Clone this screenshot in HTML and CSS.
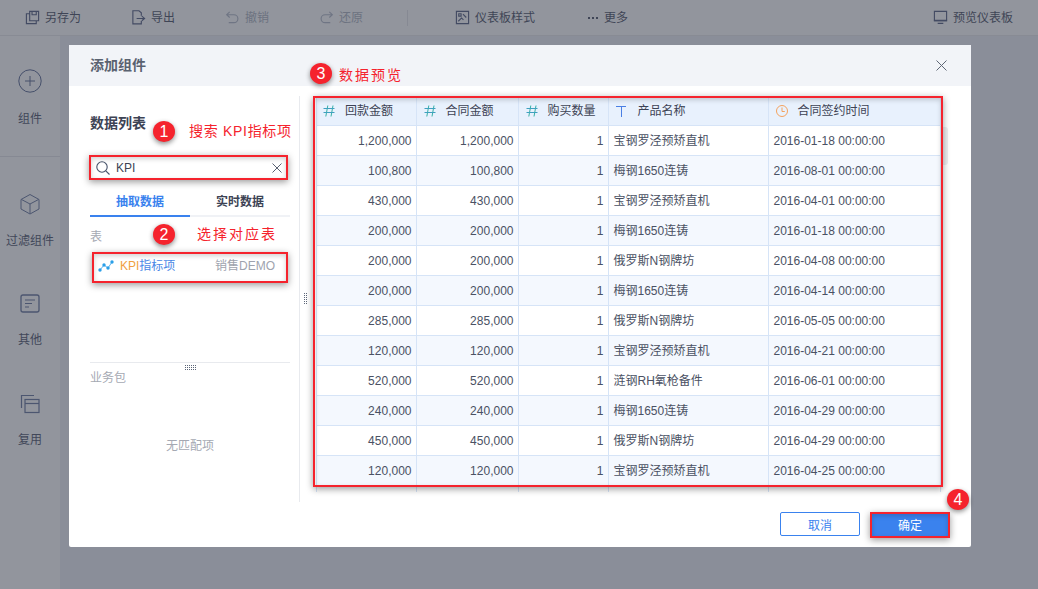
FILE: index.html
```html
<!DOCTYPE html>
<html lang="zh">
<head>
<meta charset="utf-8">
<title>添加组件</title>
<link rel="stylesheet" href="styles.css">
</head>
<body>
<svg class="defs" aria-hidden="true">
  <symbol id="hash" viewBox="0 0 12 12"><path d="M4.800 .5 2.800 11.500M10 .5 8 11.500" fill="none" stroke="#35b0a5" stroke-width="1"/><path d="M.5 3.500h11M.5 7.500h11" fill="none" stroke="#3fa0c0" stroke-width="1"/></symbol>
  <symbol id="text" viewBox="0 0 12 12"><path d="M0 1.500h10M5.500 1.500V12" fill="none" stroke="#4a7fe4" stroke-width="1"/></symbol>
  <symbol id="clock" viewBox="0 0 12 12"><circle cx="6" cy="6" r="5.500" fill="none" stroke="#f3a25e" stroke-width="1"/><path d="M6 2.500V6.500H8.800" fill="none" stroke="#f3a25e" stroke-width="1"/></symbol>
</svg>
<div class="app">
  <header class="toolbar">
    <span class="tool"><svg class="tool-icon" viewBox="0 0 16 16"><path d="M5 1.500h9.500v10H5zM5 4H1.500v10.500H12V11.500M7.500 1.500V5h4.500V1.500" fill="none" stroke="#434b63" stroke-width="1.200"/></svg>另存为</span>
    <span class="tool"><svg class="tool-icon" viewBox="0 0 16 16"><path d="M11 6V3L8.500 .8H2v14h9v-3M6 9h8.500M11.500 6.500 14.500 9l-3 2.500" fill="none" stroke="#434b63" stroke-width="1.200"/></svg>导出</span>
    <span class="tool dim"><svg class="tool-icon" viewBox="0 0 16 16"><path d="M5 2 1.800 5 5 8M2 5h7.500a4.200 4.200 0 0 1 0 8.500H4" fill="none" stroke="#6f7584" stroke-width="1.200"/></svg>撤销</span>
    <span class="tool dim"><svg class="tool-icon" viewBox="0 0 16 16"><path d="M11 2l3.200 3L11 8M14 5H6.500a4.200 4.200 0 0 0 0 8.500H12" fill="none" stroke="#6f7584" stroke-width="1.200"/></svg>还原</span>
    <span class="tool-sep"></span>
    <span class="tool"><svg class="tool-icon" viewBox="0 0 16 16"><path d="M1.500 1.500h13v13h-13zM4 4h2.500v2.500H4zM8.500 4.500l3.500 3.500M3.500 12l3.500-3.500 2 2" fill="none" stroke="#434b63" stroke-width="1.200"/></svg>仪表板样式</span>
    <span class="tool"><span class="dots"><i></i><i></i><i></i></span>更多</span>
    <span class="tool tool-end"><svg class="tool-icon" viewBox="0 0 16 16"><path d="M1.500 1.500h13v10h-13z" fill="none" stroke="#434b63" stroke-width="1.200"/><path d="M1 10.500h14v1.500H1zM5 13.500h6V15H5z" fill="#434b63"/></svg>预览仪表板</span>
  </header>
  <div class="workspace">
    <nav class="sidebar">
      <div class="side-item side-first">
        <svg class="side-icon" viewBox="0 0 24 24"><circle cx="12" cy="12" r="11.200" fill="none" stroke="#46506b" stroke-width="1"/><path d="M12 7v10M7 12h10" fill="none" stroke="#46506b" stroke-width="1"/></svg>
        <span>组件</span>
      </div>
      <div class="side-item side-second">
        <svg class="side-icon" viewBox="0 0 24 24"><path d="M12 2.500 21 7.500v9.500L12 22 3 17V7.500zM3.500 7.500 12 12l8.500-4.500M12 12v9.500" fill="none" stroke="#4c5670" stroke-width="1"/></svg>
        <span>过滤组件</span>
      </div>
      <div class="side-item">
        <svg class="side-icon" viewBox="0 0 24 24"><rect x="3" y="3" width="18" height="17" rx="2" fill="none" stroke="#4c5670" stroke-width="1.300"/><path d="M7 8h10M7 11.500h7M7 15h4" fill="none" stroke="#4c5670" stroke-width="1.200"/></svg>
        <span>其他</span>
      </div>
      <div class="side-item">
        <svg class="side-icon" viewBox="0 0 24 24"><path d="M16 3.500H3.500V16" fill="none" stroke="#4c5670" stroke-width="1.200"/><rect x="7" y="7.500" width="14" height="13" fill="none" stroke="#4c5670" stroke-width="1.200"/><path d="M7 11.500h14" stroke="#4c5670" stroke-width="1.200"/></svg>
        <span>复用</span>
      </div>
    </nav>
    <main class="canvas"></main>
  </div>

  <section class="dialog">
    <div class="dialog-head">
      <h2 class="dialog-title">添加组件</h2>
      <svg class="close" viewBox="0 0 11 11"><path d="M.5.500l10 10M10.500.500l-10 10" fill="none" stroke="#5e6675" stroke-width="1"/></svg>
    </div>
    <div class="dialog-body">
      <aside class="data-panel">
        <h3 class="panel-title">数据列表</h3>
        <div class="search">
          <svg class="search-icon" viewBox="0 0 14 14"><circle cx="6" cy="6" r="5.200" fill="none" stroke="#47536b" stroke-width="1.100"/><path d="M9.800 9.800 13.500 13.500" fill="none" stroke="#47536b" stroke-width="1.100"/></svg>
          <span class="search-text">KPI</span>
          <svg class="search-clear" viewBox="0 0 10 10"><path d="M.5.500l9 9M9.500.500l-9 9" fill="none" stroke="#5a6272" stroke-width="1"/></svg>
        </div>
        <div class="tabs">
          <span class="tab tab-active">抽取数据</span>
          <span class="tab">实时数据</span>
        </div>
        <div class="section-label">表</div>
        <div class="table-item">
          <svg class="item-icon" viewBox="0 0 16 12"><path d="M2 10 6 5l4 3 4-6" fill="none" stroke="#5fb5ef" stroke-width="1"/><circle cx="2" cy="10" r="1.700" fill="#2a9fe8"/><circle cx="6" cy="5" r="1.700" fill="#2a9fe8"/><circle cx="10" cy="8" r="1.700" fill="#2a9fe8"/><circle cx="14" cy="2" r="1.700" fill="#2a9fe8"/></svg>
          <span class="item-name"><b>KPI</b>指标项</span>
          <span class="item-pack">销售DEMO</span>
        </div>
        <div class="pack-section">
          <div class="grip grip-h"></div>
          <div class="section-label pack-label">业务包</div>
          <div class="empty">无匹配项</div>
        </div>
      </aside>
      <div class="grip grip-v"></div>
      <div class="preview">
        <div class="table-clip">
          <table class="data">
            <colgroup><col class="c1"><col class="c2"><col class="c3"><col class="c4"><col class="c5"></colgroup>
            <thead>
              <tr>
                <th><svg class="th-icon"><use href="#hash"/></svg>回款金额</th>
                <th><svg class="th-icon"><use href="#hash"/></svg>合同金额</th>
                <th><svg class="th-icon"><use href="#hash"/></svg>购买数量</th>
                <th><svg class="th-icon"><use href="#text"/></svg>产品名称</th>
                <th><svg class="th-icon"><use href="#clock"/></svg>合同签约时间</th>
              </tr>
            </thead>
            <tbody>
              <tr><td class="num">1,200,000</td><td class="num">1,200,000</td><td class="num">1</td><td>宝钢罗泾预矫直机</td><td>2016-01-18 00:00:00</td></tr>
              <tr><td class="num">100,800</td><td class="num">100,800</td><td class="num">1</td><td>梅钢1650连铸</td><td>2016-08-01 00:00:00</td></tr>
              <tr><td class="num">430,000</td><td class="num">430,000</td><td class="num">1</td><td>宝钢罗泾预矫直机</td><td>2016-04-01 00:00:00</td></tr>
              <tr><td class="num">200,000</td><td class="num">200,000</td><td class="num">1</td><td>梅钢1650连铸</td><td>2016-01-18 00:00:00</td></tr>
              <tr><td class="num">200,000</td><td class="num">200,000</td><td class="num">1</td><td>俄罗斯N钢牌坊</td><td>2016-04-08 00:00:00</td></tr>
              <tr><td class="num">200,000</td><td class="num">200,000</td><td class="num">1</td><td>梅钢1650连铸</td><td>2016-04-14 00:00:00</td></tr>
              <tr><td class="num">285,000</td><td class="num">285,000</td><td class="num">1</td><td>俄罗斯N钢牌坊</td><td>2016-05-05 00:00:00</td></tr>
              <tr><td class="num">120,000</td><td class="num">120,000</td><td class="num">1</td><td>宝钢罗泾预矫直机</td><td>2016-04-21 00:00:00</td></tr>
              <tr><td class="num">520,000</td><td class="num">520,000</td><td class="num">1</td><td>涟钢RH氧枪备件</td><td>2016-06-01 00:00:00</td></tr>
              <tr><td class="num">240,000</td><td class="num">240,000</td><td class="num">1</td><td>梅钢1650连铸</td><td>2016-04-29 00:00:00</td></tr>
              <tr><td class="num">450,000</td><td class="num">450,000</td><td class="num">1</td><td>俄罗斯N钢牌坊</td><td>2016-04-29 00:00:00</td></tr>
              <tr><td class="num">120,000</td><td class="num">120,000</td><td class="num">1</td><td>宝钢罗泾预矫直机</td><td>2016-04-25 00:00:00</td></tr>
              <tr><td></td><td></td><td></td><td></td><td></td></tr>
            </tbody>
          </table>
        </div>
        <div class="scroll-thumb"></div>
      </div>
    </div>
    <div class="dialog-foot">
      <button class="btn btn-ghost">取消</button>
      <button class="btn btn-primary">确定</button>
    </div>

    <div class="frame frame-search"></div>
    <div class="frame frame-item"></div>
    <div class="frame frame-table"></div>
    <div class="frame frame-ok"></div>
    <span class="badge badge-1">1</span>
    <span class="badge badge-2">2</span>
    <span class="badge badge-3">3</span>
    <span class="badge badge-4">4</span>
    <span class="note note-1">搜索 KPI指标项</span>
    <span class="note note-2">选择对应表</span>
    <span class="note note-3">数据预览</span>
  </section>
</div>
</body>
</html>
```
FILE: styles.css
```css
* { box-sizing: border-box; }
html, body { margin: 0; height: 100%; }
body {
  font-family: "Liberation Sans", "Noto Sans CJK SC", sans-serif;
  font-size: 12px;
  color: #3d4354;
  overflow: hidden;
}
.defs { display: none; }
.app {
  position: relative;
  width: 1038px;
  height: 589px;
  display: flex;
  flex-direction: column;
  background: #8a8e99;
}

/* toolbar */
.toolbar {
  height: 36px;
  flex: none;
  display: flex;
  align-items: center;
  gap: 50px;
  padding: 0 25px;
  background: #92959d;
  border-bottom: 1px solid #888b94;
}
.tool { display: flex; align-items: center; gap: 5px; color: #3f4556; white-space: nowrap; line-height: 16px; }
.tool.dim { color: #6c7280; }
.tool-end { margin-left: auto; }
.tool-icon { width: 15px; height: 15px; flex: none; }
.tool-sep { width: 1px; height: 16px; background: #868993; margin: 0 -3px 0 -6px; }
.dots { display: flex; gap: 2px; width: 12px; margin-left: 3px; margin-right: -1px; }
.dots i { width: 2px; height: 2px; background: #3f4556; }

/* sidebar */
.workspace { flex: 1; display: flex; min-height: 0; }
.sidebar { width: 60px; flex: none; background: #92959d; }
.canvas { flex: 1; background: #8a8e99; }
.side-item {
  height: 100px;
  display: flex;
  flex-direction: column;
  align-items: center;
  padding-top: 34px;
  gap: 16px;
  color: #414759;
  line-height: 16px;
}
.side-first {
  height: 121px;
  padding-top: 33px;
  gap: 18px;
  border-bottom: 1px solid #868993;
}
.side-second { height: 101px; padding-top: 35px; gap: 17px; }
.side-icon { width: 24px; height: 24px; flex: none; }

/* dialog */
.dialog {
  position: absolute;
  left: 69px;
  top: 45px;
  width: 902px;
  height: 502px;
  display: flex;
  flex-direction: column;
  background: #fff;
  border-radius: 2px;
}
.dialog-head {
  height: 41px;
  flex: none;
  display: flex;
  align-items: center;
  justify-content: space-between;
  padding: 0 24px 0 21px;
  background: #f2f4f8;
}
.dialog-title { margin: 0 0 1px; font-size: 14px; line-height: 20px; font-weight: 700; color: #5a6270; }
.close { width: 11px; height: 11px; }
.dialog-body { flex: 1; display: flex; padding-top: 10px; min-height: 0; }

/* left panel */
.data-panel {
  width: 231px;
  flex: none;
  padding: 17px 9px 0 21px;
  border-right: 1px solid #e8eaee;
  display: flex;
  flex-direction: column;
}
.panel-title { margin: 0 0 22px; font-size: 14px; line-height: 20px; font-weight: 700; color: #3d4354; }
.search {
  height: 25px;
  width: 198px;
  flex: none;
  display: flex;
  align-items: center;
  padding: 0 6px 0 6px;
  background: #fff;
}
.search-icon { width: 14px; height: 14px; flex: none; margin-right: 6px; }
.search-text { flex: 1; color: #3d4354; line-height: 16px; }
.search-clear { width: 10px; height: 10px; flex: none; }
.tabs { display: flex; flex: none; margin-top: 12px; border-bottom: 2px solid #f0f2f6; width: 200px; }
.tab {
  width: 100px;
  height: 25px;
  line-height: 20px;
  text-align: center;
  font-weight: 700;
  margin-bottom: -2px;
  color: #3d4354;
}
.tab-active { color: #3a82ee; border-bottom: 2px solid #3a82ee; }
.section-label { color: #a5a9b3; }
.data-panel > .section-label { margin-top: 12px; line-height: 17px; }
.table-item {
  margin-top: 5px;
  width: 197px;
  height: 30px;
  flex: none;
  display: flex;
  align-items: center;
  padding-left: 7px;
  margin-left: 1px;
  line-height: 16px;
}
.item-icon { width: 16px; height: 12px; flex: none; margin-right: 6px; }
.item-name { color: #4a88e6; flex: none; width: 95px; }
.item-name b { color: #f0a040; font-weight: 400; }
.item-pack { color: #9ea3ae; }
.pack-section {
  position: relative;
  margin-top: 81px;
  width: 200px;
  flex: 1;
  border-top: 1px solid #e8eaee;
}
.pack-label { margin-top: 7px; line-height: 17px; }
.empty { margin-top: 51px; line-height: 17px; text-align: center; color: #a5a9b3; }
.grip {
  background-image: conic-gradient(#5c6678 25%, transparent 0);
  background-size: 2px 2px;
}
.grip-h { position: absolute; left: 94px; top: 2px; width: 12px; height: 5px; }
.grip-v { width: 5px; height: 12px; flex: none; margin: 197px -1px 0 3px; }

/* preview */
.preview { position: relative; flex: 1; min-width: 0; }
.table-clip {
  margin: 1px 0 0 9px;
  width: 625px;
  height: 395px;
  overflow: hidden;
  border-left: 1px solid #d6e4f7;
}
.data {
  border-collapse: collapse;
  table-layout: fixed;
  width: 623px;
  line-height: 16px;
}
.c1 { width: 99px; }
.c2 { width: 102px; }
.c3 { width: 90px; }
.c4 { width: 160px; }
.c5 { width: 172px; }
.data th, .data td {
  border: 1px solid #d6e4f7;
  height: 30px;
  padding: 1px 4px 0 5px;
  font-weight: 400;
  text-align: left;
  color: #4a5163;
  white-space: nowrap;
}
.data thead th { height: 28px; padding: 0 4px 0 7px; background: #e8f1fd; color: #3d4354; border-top: 0; }
.data thead th:first-child { padding-left: 6px; }
.data th:first-child, .data td:first-child { border-left: 0; }
.data tbody tr:nth-child(even) td { background: #f4f8fe; }
.data .num { text-align: right; }
.th-icon { width: 12px; height: 12px; margin-right: 10px; vertical-align: -2px; }
.scroll-thumb {
  position: absolute;
  left: 634px;
  top: 31px;
  width: 7px;
  height: 38px;
  background: #eeeef1;
  border-radius: 0 3px 3px 0;
}

/* footer */
.dialog-foot {
  height: 45px;
  flex: none;
  display: flex;
  justify-content: flex-end;
  gap: 10px;
  padding: 10px 21px 0 0;
}
.btn {
  width: 80px;
  height: 24px;
  font: inherit;
  border-radius: 2px;
  padding: 0;
}
.btn-ghost { background: #fff; border: 1px solid #3a82ee; color: #3a82ee; }
.btn-primary { background: #3a82ee; border: 0; color: #fff; height: 26px; padding-bottom: 2px; }

/* annotations */
.frame {
  position: absolute;
  border: 2px solid #f5232d;
  box-shadow: 0 2px 7px rgba(0, 0, 0, .4), inset 0 2px 5px rgba(0, 0, 0, .18);
}
.frame-search { left: 20px; top: 110px; width: 199px; height: 25px; }
.frame-item { left: 23px; top: 207px; width: 196px; height: 31px; }
.frame-table { left: 244px; top: 51px; width: 630px; height: 391px; }
.frame-ok { left: 801px; top: 467px; width: 80px; height: 26px; }
.badge {
  position: absolute;
  width: 22px;
  height: 21px;
  line-height: 21px;
  border-radius: 50%;
  text-align: center;
  font-size: 16px;
  color: #fff;
  background: #f5232d;
  box-shadow: 0 2px 5px rgba(0, 0, 0, .45);
}
.badge-1 { left: 84px; top: 76px; }
.badge-2 { left: 84px; top: 179px; }
.badge-3 { left: 241px; top: 18px; }
.badge-4 { left: 878px; top: 444px; }
.note { position: absolute; font-size: 14px; line-height: 20px; color: #f5232d; white-space: nowrap; }
.note-1 { left: 120px; top: 76px; letter-spacing: .7px; }
.note-2 { left: 128px; top: 179px; letter-spacing: 2px; }
.note-3 { left: 270px; top: 20px; letter-spacing: 2px; }
```
